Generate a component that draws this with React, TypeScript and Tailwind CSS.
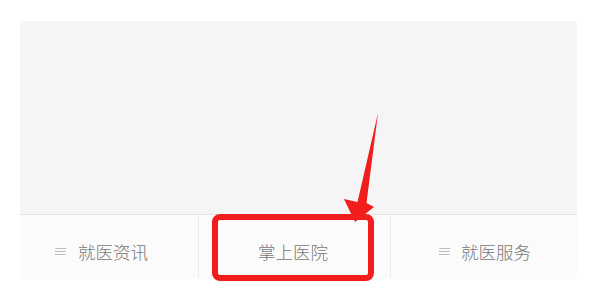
import React from "react";

function MenuIcon() {
    return (
        <svg width="11" height="9" viewBox="0 0 11 9" className="shrink-0">
            <rect x="0" y="1" width="11" height="1" fill="#bdbdbd" />
            <rect x="0" y="4" width="11" height="1" fill="#bdbdbd" />
            <rect x="0" y="7" width="11" height="1" fill="#bdbdbd" />
        </svg>
    );
}

export default function App() {
    return (
        <div
            className="relative w-[600px] h-[288px] bg-white overflow-hidden"
            style={{ fontFamily: '"Noto Sans CJK SC", "Noto Sans", sans-serif' }}
        >
            <div className="ml-[20px] mt-[21px] w-[557px] flex flex-col">
                {/* Content area */}
                <div className="h-[194px] bg-[#f5f5f5] border-b border-[#e3e3e3]" />

                {/* Bottom tab bar */}
                <div className="h-[64px] bg-[#fbfbfb] flex text-[17.5px] leading-none font-light text-[#777777]">
                    <div className="w-[179px] flex items-center pl-[35px] pt-[9px] gap-[12px] border-r border-[#ececec]">
                        <MenuIcon />
                        <span>就医资讯</span>
                    </div>
                    <div className="w-[192px] flex items-center pl-[59px] pt-[9px] border-r border-[#ececec]">
                        <span>掌上医院</span>
                    </div>
                    <div className="flex-1 flex items-center pl-[48px] pt-[9px] gap-[11px]">
                        <MenuIcon />
                        <span>就医服务</span>
                    </div>
                </div>
            </div>

            {/* Annotation: red box */}
            <div className="absolute left-[212px] top-[214px] w-[162px] h-[67px] border-[6.5px] border-[#f21d1d] rounded-[8px]" />

            {/* Annotation: arrow */}
            <svg
                className="absolute left-0 top-0 pointer-events-none"
                width="600"
                height="288"
                viewBox="0 0 600 288"
            >
                <polygon
                    points="378,113 366.5,203 374,207 355,222 344,199 357.5,202"
                    fill="#f21d1d"
                    strokeLinejoin="round"
                />
            </svg>
        </div>
    );
}
